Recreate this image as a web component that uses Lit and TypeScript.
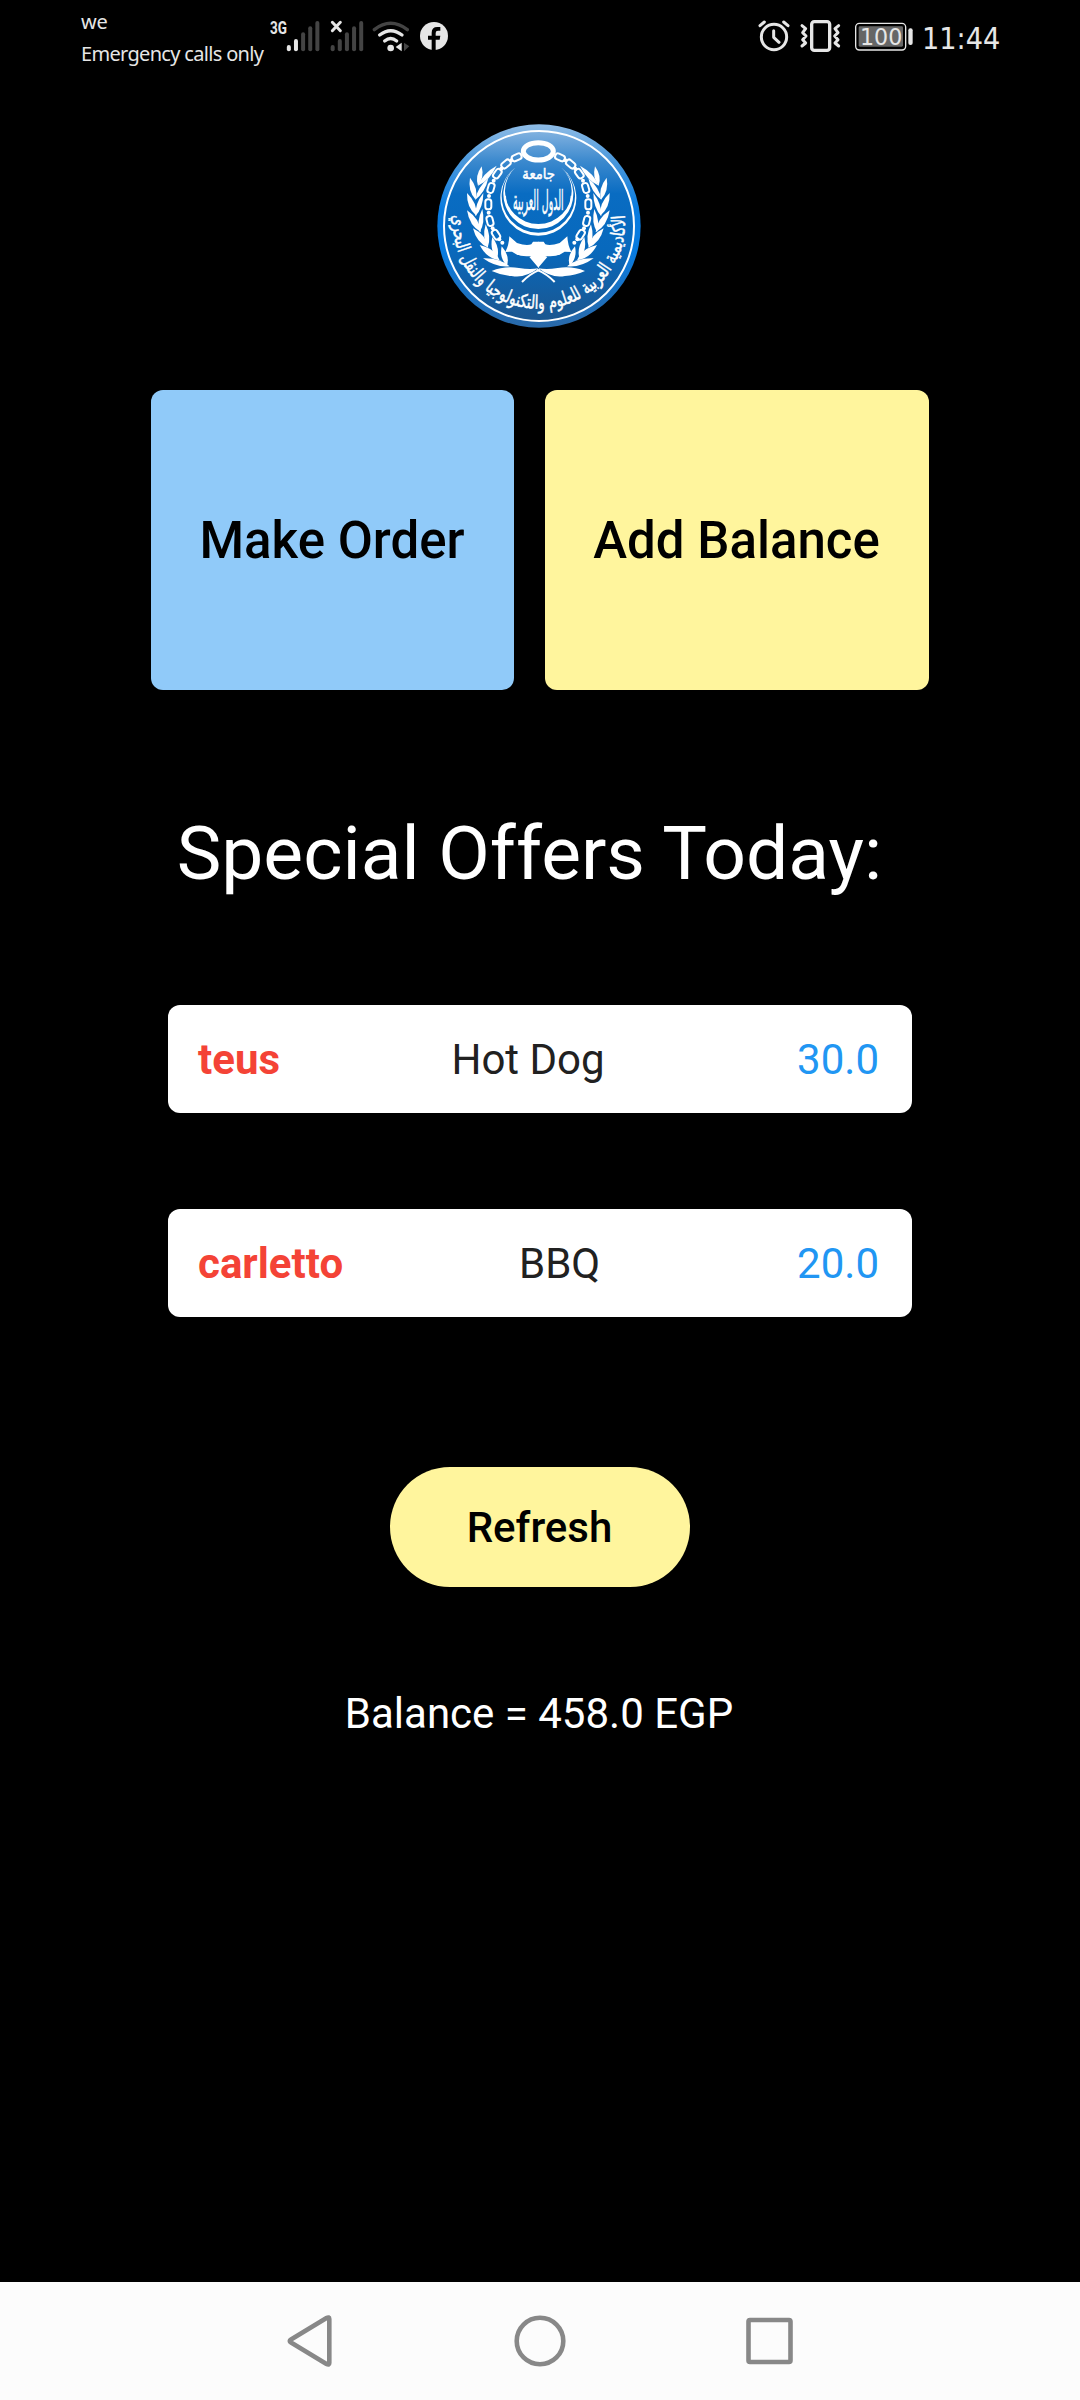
import { LitElement, html, svg, css } from "lit";
import { customElement } from "lit/decorators.js";

type Pt = [number, number];

/** Lens-shaped laurel leaf between a base and a tip. */
const leaf = (a: Pt, b: Pt, w: number) => {
  const mx = a[0] * 0.55 + b[0] * 0.45;
  const my = a[1] * 0.55 + b[1] * 0.45;
  const len = Math.hypot(b[0] - a[0], b[1] - a[1]) || 1;
  const nx = (-(b[1] - a[1]) / len) * w;
  const ny = ((b[0] - a[0]) / len) * w;
  return `M${a[0]} ${a[1]}Q${mx + nx} ${my + ny} ${b[0]} ${b[1]}Q${mx - nx} ${my - ny} ${a[0]} ${a[1]}Z`;
};

const LEAVES: [Pt, Pt, number][] = [
  [[145, 210], [201, 150], 15],
  [[145, 210], [156, 152], 15],
  [[137, 252], [176, 188], 14],
  [[138, 252], [121, 186], 17],
  [[137, 302], [161, 232], 14],
  [[140, 300], [112, 232], 18],
  [[150, 350], [158, 280], 14],
  [[154, 350], [112, 284], 19],
  [[174, 396], [168, 326], 15],
  [[176, 396], [130, 338], 19],
  [[202, 430], [188, 364], 17],
  [[210, 434], [150, 388], 20],
  [[232, 450], [216, 392], 17],
  [[240, 452], [160, 428], 16],
];

const LINKS: [number, number, number][] = [
  [261, 125, -24],
  [229, 145, -40],
  [203, 174, -54],
  [184, 217, -74],
  [176, 266, 90],
  [181, 316, 76],
  [199, 357, 58],
];

const JOINTS: Pt[] = [[245, 134], [215, 159], [192, 195], [178, 241], [177, 291], [189, 338], [209, 371], [218, 381]];

@customElement("app-crest")
export class AppCrest extends LitElement {
  static styles = css`
    :host { display: block; }
    .crest { display: block; width: 204px; height: 204px; }
    .ink { fill: #fff; }
    .line { fill: none; stroke: #fff; }
    .script { fill: #fff; font-family: "DejaVu Sans", sans-serif; stroke: #fff; stroke-width: 1.5px; }
    .motto { font-size: 56px; }
  `;

  private half() {
    return svg`
      ${LEAVES.map(([a, b, w]) => svg`<path class="ink" d=${leaf(a, b, w)} />`)}
      ${LINKS.map(([x, y, r]) => svg`<rect class="line" stroke-width="6" x=${x - 15} y=${y - 9} width="30" height="18" rx="8" transform=${`rotate(${r} ${x} ${y})`} />`)}
      ${JOINTS.map(([x, y]) => svg`<circle class="ink" cx=${x} cy=${y} r="6" />`)}
      <path class="ink" d="M327 457L299 424L305 421Q270 426 247 408L227 409Q238 388 239 362L262 382Q290 392 305 386L310 378H327Z" />
      <path class="ink" d="M186 466Q225 450 268 457Q300 463 326 458Q285 489 246 481Q216 480 186 466Z" />
      <path class="line" stroke-width="6" d="M277 499Q300 475 331 462" />
    `;
  }

  render() {
    return html`<svg class="crest" viewBox="22 25 612 612" role="img">
      <defs>
        <linearGradient id="rim" x1="0" y1="0" x2="0" y2="1">
          <stop offset="0" stop-color="#8fbce6" />
          <stop offset=".18" stop-color="#4a98dc" />
          <stop offset=".42" stop-color="#087be0" />
          <stop offset=".62" stop-color="#087be0" />
          <stop offset="1" stop-color="#2a69a8" />
        </linearGradient>
        <linearGradient id="sea" x1="0" y1="0" x2="0" y2="1">
          <stop offset="0" stop-color="#82b2e0" />
          <stop offset=".16" stop-color="#3b89ce" />
          <stop offset=".33" stop-color="#096cc2" />
          <stop offset=".62" stop-color="#0869bd" />
          <stop offset="1" stop-color="#1b568f" />
        </linearGradient>
        <path id="curve" d="M85 235A258 258 0 1 0 571 235" />
      </defs>
      <circle cx="328" cy="331" r="305" fill="url(#rim)" />
      <circle cx="328" cy="331" r="285" fill="url(#sea)" stroke="#fff" stroke-width="6" />
      <g>${this.half()}</g>
      <g transform="translate(652 0) scale(-1 1)">${this.half()}</g>
      <ellipse class="line" cx="326" cy="107" rx="45" ry="26" stroke-width="15" />
      <path class="ink" d="M258 155A114 114 0 1 0 394 155A110 110 0 1 1 258 155Z" />
      <path class="ink" d="M258 155A105 105 0 1 0 394 155A100 98 0 1 1 258 155Z" />
      <path class="line" stroke-width="4" d="M227 240A99 92 0 0 0 425 240" />
      <text class="script" font-size="44" x="327" y="190" text-anchor="middle" textLength="98" lengthAdjust="spacingAndGlyphs">جامعة</text>
      <text class="script" font-size="82" x="326" y="282" text-anchor="middle" textLength="152" lengthAdjust="spacingAndGlyphs">الدول العربية</text>
      <text class="script motto" text-anchor="middle" direction="rtl"><textPath href="#curve" startOffset="50%" textLength="858" lengthAdjust="spacingAndGlyphs">الأكاديمية العربية للعلوم والتكنولوجيا والنقل البحري</textPath></text>
    </svg>`;
  }
}

@customElement("status-bar")
export class StatusBar extends LitElement {
  static styles = css`
    :host { display: block; color: #e6e6e6; }
    .bar { display: flex; justify-content: space-between; height: 75px; padding: 0 79px 0 81px; }
    .left, .right { display: flex; align-items: flex-start; }
    .carrier { width: 189px; font: 20px/32px "Noto Sans", sans-serif; padding-top: 6px; white-space: nowrap; }
    .op { letter-spacing: -0.3px; }
    .note { letter-spacing: -0.68px; }
    .icon { display: block; height: 34px; margin-top: 18px; }
    .signal { width: 53px; margin-right: 6px; }
    .nosim { width: 36px; margin-right: 6px; }
    .wifi { width: 39px; margin-right: 9px; }
    .fb { width: 30px; }
    .alarm { width: 32px; margin-right: 9px; }
    .vibrate { width: 42px; margin-right: 13px; }
    .battery { width: 60px; margin-right: 8px; }
    .time { width: 79px; }
    .lit { fill: #e6e6e6; }
    .dim { fill: #444; }
    .stroke { fill: none; stroke: #e6e6e6; stroke-linecap: round; stroke-linejoin: round; }
    .stroke-dim { fill: none; stroke: #444; stroke-linecap: round; }
    .label { font-family: Roboto, sans-serif; font-weight: 700; fill: #e6e6e6; }
    .digits { font-family: "DejaVu Sans", sans-serif; fill: #e6e6e6; }
  `;

  private bars(x0: number, lit: number) {
    return [135, 117, 97, 79, 63].map(
      (y, i) => svg`<rect class=${i < lit ? "lit" : "dim"} x=${x0 + i * 21.4 - 6} y=${y} width="12" height=${154 - y} rx="6" />`
    );
  }

  render() {
    return html`<div class="bar">
      <div class="left">
        <div class="carrier"><div class="op">we</div><div class="note">Emergency calls only</div></div>
        <svg class="icon signal" viewBox="30 54 159 102">
          <text class="label" x="30" y="102" font-size="55" textLength="51" lengthAdjust="spacingAndGlyphs">3G</text>
          ${this.bars(86.5, 2)}
        </svg>
        <svg class="icon nosim" viewBox="207 54 108 102">
          ${this.bars(218, 0)}
          <path class="stroke" stroke-width="9" d="M217 67L241 92M241 67L217 92" />
        </svg>
        <svg class="icon wifi" viewBox="333 54 117 102">
          <path class="stroke-dim" stroke-width="10" d="M343 89Q392 51 442 89" />
          <path class="stroke" stroke-width="10" d="M359 105Q392 79 426 105" />
          <path class="stroke" stroke-width="10" d="M374 123Q392 108 410 123" />
          <circle class="lit" cx="392" cy="144" r="10" />
          <path class="lit" d="M407 141L425 128V154Z" />
          <path class="dim" d="M432 128L448 139L432 154Z" />
        </svg>
        <svg class="icon fb" viewBox="477 54 90 102">
          <circle class="lit" cx="522" cy="108" r="42" />
          <path d="M515 151V119H504V107H515V98Q515 81 532 81H541V92H534Q527 92 527 99V107H541L539 119H527V151Z" />
        </svg>
      </div>
      <div class="right">
        <svg class="icon alarm" viewBox="54 54 96 102">
          <circle class="stroke" stroke-width="9" cx="102" cy="111" r="38" />
          <path class="stroke" stroke-width="9" d="M101 92V112L117 127M60 77L73 66M131 66L144 77" />
        </svg>
        <svg class="icon vibrate" viewBox="177 54 126 102">
          <rect class="stroke" stroke-width="10" x="215" y="65" width="54" height="86" rx="8" />
          <path class="stroke" stroke-width="9" d="M186 77L197 86L188 98L198 108L188 119L197 129L186 138M296 77L285 86L294 98L284 108L294 119L285 129L296 138" />
        </svg>
        <svg class="icon battery" viewBox="342 54 180 102">
          <rect class="stroke" stroke-width="4" x="347" y="70" width="150" height="80" rx="11" />
          <rect x="356" y="79" width="133" height="61" rx="4" fill="#666" />
          <rect class="lit" x="505" y="85" width="13" height="50" rx="6" />
          <text class="digits" x="360" y="134" font-size="68" textLength="127" lengthAdjust="spacingAndGlyphs">100</text>
        </svg>
        <svg class="icon time" viewBox="546 54 237 102">
          <text class="digits" x="546" y="147" font-size="88" textLength="235" lengthAdjust="spacingAndGlyphs">11:44</text>
        </svg>
      </div>
    </div>`;
  }
}

@customElement("app-root")
export class AppRoot extends LitElement {
  static styles = css`
    :host { display: block; font-family: Roboto, sans-serif; }
    .screen { display: flex; flex-direction: column; width: 1080px; height: 2400px; background: #000; overflow: hidden; }
    .content { flex: 1; display: flex; flex-direction: column; align-items: center; padding-top: 49px; }
    .crest { margin-right: 2px; }
    .actions { display: flex; gap: 31px; margin-top: 62px; }
    button { font: inherit; border: 0; padding: 0 1px 0 0; box-sizing: border-box; color: #000; font-weight: 500; white-space: nowrap; }
    .tile { height: 300px; border-radius: 12px; font-size: 51px; }
    .order { width: 363px; background: #90caf9; }
    .add { width: 384px; background: #fff59d; }
    h1 { margin: 115px 21px 0 0; font-size: 75px; line-height: 96px; font-weight: 400; color: #fff; white-space: nowrap; }
    .offers { display: flex; flex-direction: column; gap: 96px; margin-top: 104px; }
    .offer { box-sizing: border-box; width: 744px; height: 108px; padding: 0 33px 0 30px; display: flex; align-items: center; justify-content: space-between; border-radius: 12px; background: #fff; font-size: 42px; }
    .name { color: #f44336; font-weight: 700; }
    .dish { color: #212121; }
    .price { color: #2196f3; padding-left: 21px; }
    .refresh { width: 300px; height: 120px; margin-top: 150px; border-radius: 60px; background: #fff59d; font-size: 42px; }
    .balance { margin: 102px 2px 0 0; font-size: 42px; line-height: 50px; color: #fff; }
    .nav { display: flex; justify-content: center; align-items: center; gap: 174px; height: 118px; background: #fcfcfc; }
    .nav svg { display: block; width: 56px; height: 56px; fill: none; stroke: #888; stroke-width: 4.6; stroke-linejoin: round; }
  `;

  private offers = [
    { name: "teus", dish: "Hot Dog", price: "30.0" },
    { name: "carletto", dish: "BBQ", price: "20.0" },
  ];

  render() {
    return html`<div class="screen">
      <status-bar></status-bar>
      <main class="content">
        <app-crest class="crest"></app-crest>
        <div class="actions">
          <button class="tile order">Make Order</button>
          <button class="tile add">Add Balance</button>
        </div>
        <h1>Special Offers Today:</h1>
        <div class="offers">
          ${this.offers.map(
            (o) => html`<div class="offer"><span class="name">${o.name}</span><span class="dish">${o.dish}</span><span class="price">${o.price}</span></div>`
          )}
        </div>
        <button class="refresh">Refresh</button>
        <p class="balance">Balance = 458.0 EGP</p>
      </main>
      <nav class="nav">
        <svg viewBox="0 0 56 56"><path d="M43.5 5L8 26.5Q5.5 28 8 29.5L43.5 51Q46.3 52.5 46.3 50V6Q46.3 3.5 43.5 5Z" transform="translate(1 0)" /></svg>
        <svg viewBox="0 0 56 56"><circle cx="28" cy="28" r="23.3" /></svg>
        <svg viewBox="0 0 56 56"><rect x="6.5" y="7" width="42" height="42" rx="1.5" /></svg>
      </nav>
    </div>`;
  }
}
